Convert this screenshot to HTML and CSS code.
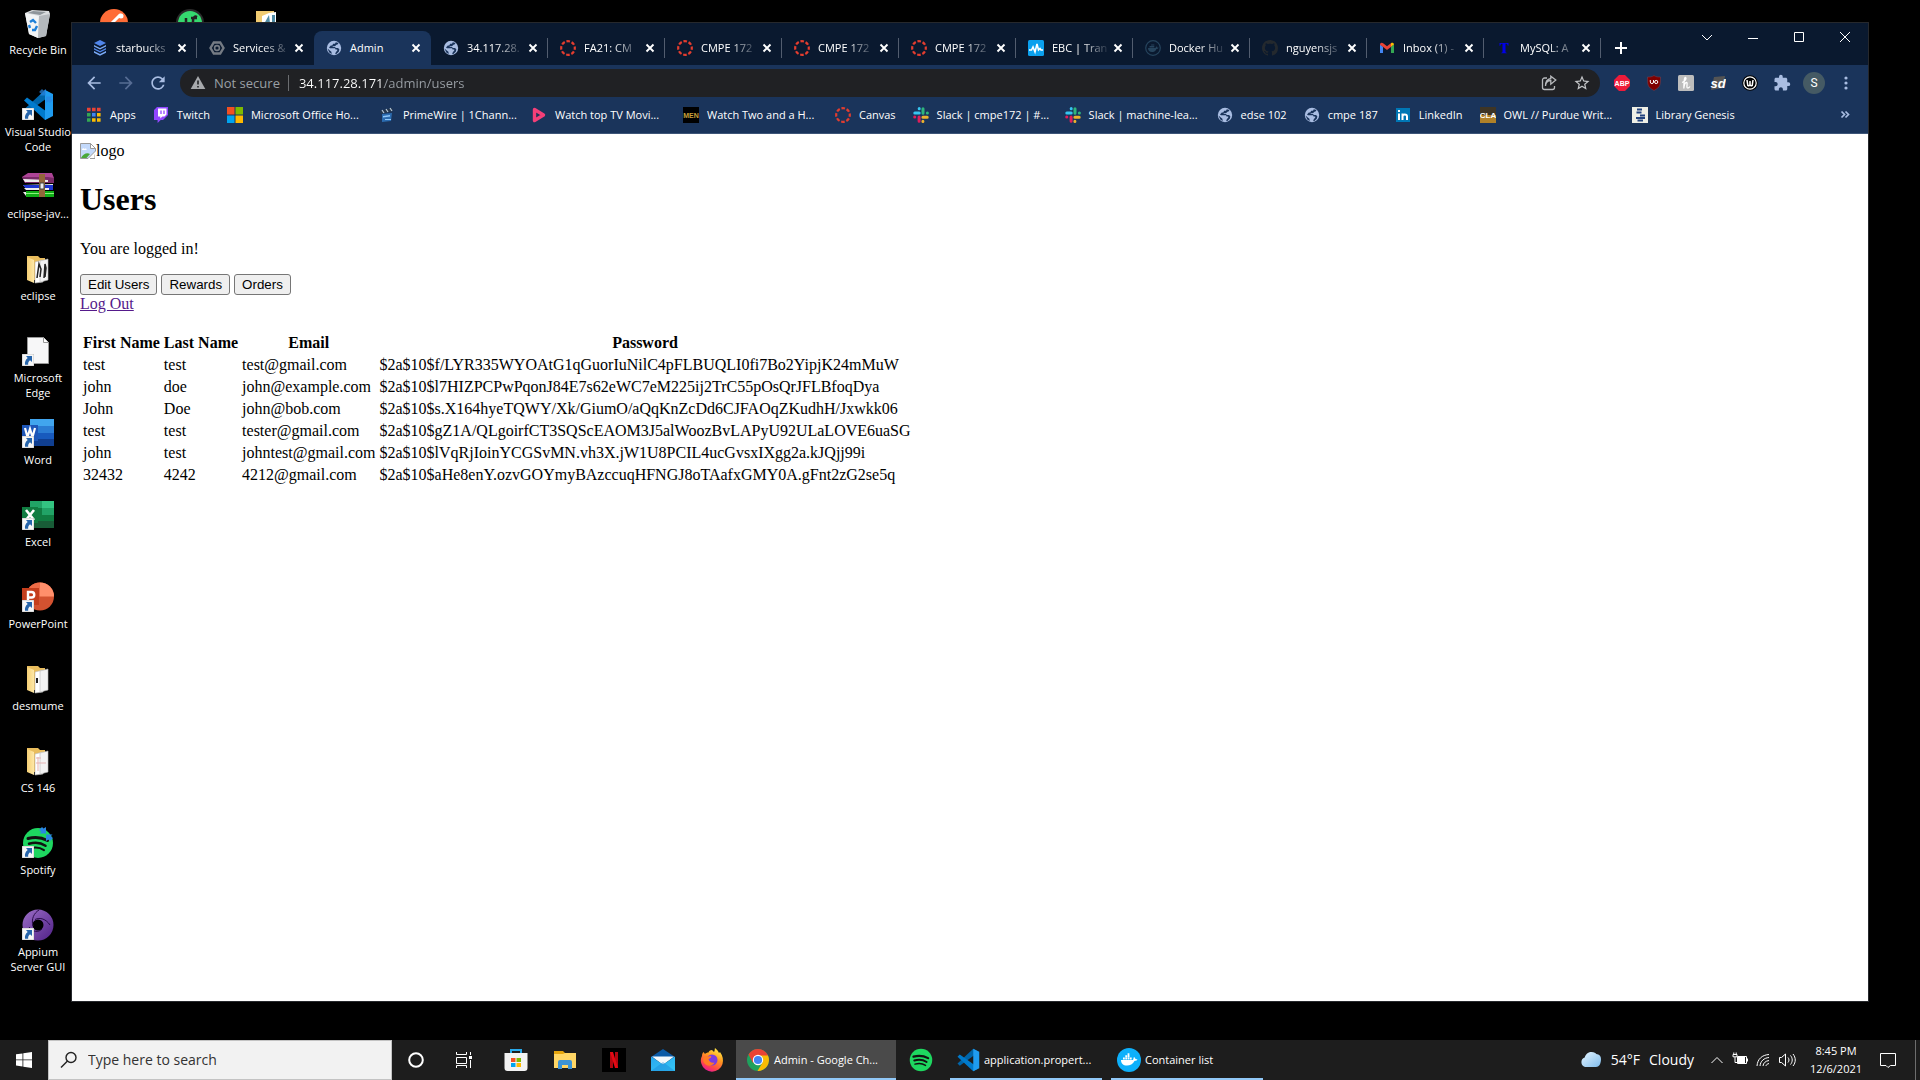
FILE: index.html
```html
<!DOCTYPE html>
<html lang="en">
<head>
<meta charset="utf-8">
<title>Admin</title>
<link rel="stylesheet" href="styles.css">
</head>
<body>
<svg class="defs" width="0" height="0" aria-hidden="true">
  <defs>
    <linearGradient id="g-purple" x1="0" y1="0" x2="1" y2="1"><stop offset="0" stop-color="#9062bd"/><stop offset="1" stop-color="#5c2d91"/></linearGradient>
    <linearGradient id="g-fox" x1="0.8" y1="0" x2="0.3" y2="1"><stop offset="0" stop-color="#fff04a"/><stop offset=".4" stop-color="#ff9a1f"/><stop offset=".75" stop-color="#ff4a45"/><stop offset="1" stop-color="#e8159c"/></linearGradient>
    <linearGradient id="g-cloud" x1="0" y1="0" x2="1" y2="1"><stop offset="0" stop-color="#e6f5ff"/><stop offset="1" stop-color="#7fbcec"/></linearGradient>
    <linearGradient id="g-folder" x1="0" y1="0" x2="1" y2="0"><stop offset="0" stop-color="#f5cf74"/><stop offset="1" stop-color="#ffe9a8"/></linearGradient>
    <linearGradient id="g-mail" x1="0" y1="0" x2="1" y2="1"><stop offset="0" stop-color="#2aa7ee"/><stop offset="1" stop-color="#35c6f5"/></linearGradient>
  </defs>
  <symbol id="globe" viewBox="0 0 16 16"><circle cx="8" cy="8" r="7.2" fill="#a9bde2"/><path fill="#1a345b" d="M9.800 2.200 9 3.800H7.200L6.200 5.500H4.800L3 7.400l1 .8h5l.6 1.300h1.600v1.300l-1.300 1.200-.7 1.900h1.200l2.400-2.100.6-2.200-1.300-1.500H10L8.600 6.700h-2l.2-.8h2.400l1.300-1.200 1.400-.4.5-1.200zM1.500 8.600l2.300 2 1.600 1.200.3 2.200-2.400-1.400z"/></symbol>
  <symbol id="canvas" viewBox="0 0 16 16"><circle cx="8" cy="8" r="6.8" fill="none" stroke="#e43d2f" stroke-width="2.2" stroke-dasharray="3.6 1.74" stroke-dashoffset="1.8"/></symbol>
  <symbol id="slack" viewBox="0 0 16 16"><g stroke-width="3" stroke-linecap="round"><path stroke="#36c5f0" d="M1.800 6h4.400M6.200 1.600v.1"/><path stroke="#2eb67d" d="M10 1.800v4.400M14.300 6.100h.1"/><path stroke="#ecb22e" d="M9.900 10.200h4.300M9.900 14.300v.1"/><path stroke="#e01e5a" d="M6.100 10.100v4.200M1.700 10.100h.1"/></g></symbol>
  <symbol id="close" viewBox="0 0 16 16"><path d="m4.500 4.500 7 7m0-7-7 7" fill="none" stroke="#fff" stroke-width="1.900"/></symbol>
  <symbol id="shortcut" viewBox="0 0 12 12"><path fill="#f7f7f7" stroke="#aaa" stroke-width=".6" d="M0 0h12v12H0z"/><path fill="#2765ab" d="M4 2h6v6L8 6.300C6.500 7.500 6 8.600 6.200 10.800H3C2.600 8.200 3.600 5.600 5.700 4z"/></symbol>
  <symbol id="vscode" viewBox="0 0 32 32"><path fill="#0065a9" d="M2 20.500 23 1l5 3v3L5 23.500z"/><path fill="#007acc" d="m2 11.500 3-3L28 25v3l-5 3z"/><path fill="#1f9cf0" d="m23 1 8 4v22l-8 4z"/></symbol>
  <symbol id="spotify" viewBox="0 0 32 32"><circle cx="16" cy="16" r="15" fill="#1ed760"/><path fill="none" stroke="#111" stroke-linecap="round" stroke-width="3" d="M6 11.500c7-2 14-1 19.500 2"/><path fill="none" stroke="#111" stroke-linecap="round" stroke-width="2.500" d="M7 16.700c6-1.700 12-1 16.500 2"/><path fill="none" stroke="#111" stroke-linecap="round" stroke-width="2" d="M8 21.500c5-1.500 10-1 14 1.700"/></symbol>
  <symbol id="folder" viewBox="0 0 32 32"><path fill="#e9bd5d" d="M5 3h11l2 2h5v22H5z"/><path fill="#fff" stroke="#bbb" stroke-width=".6" d="m13 9 8-2v22l-8 1z"/><path fill="#f3f3f3" stroke="#bbb" stroke-width=".6" d="m18 8 8-2v21l-8 2z"/><path fill="url(#g-folder)" d="M5 4 12 7v23l-7-3z"/></symbol>
  <symbol id="arrows" viewBox="0 0 14 14"><path fill="#2a86e2" d="m0 3 3-3 1.500 1.500L7 0v6.500H.5L2.300 4.800zM14 11l-3 3-1.500-1.500L7 14V7.500h6.500L11.700 9.200z"/></symbol>
</svg>

<main class="desktop">
  <ul class="shortcuts">
    <li class="shortcut"><svg width="32" height="32" viewBox="0 0 32 32"><path fill="#d9dcde" d="m3 6 7-3 17 1 1 3-4 22-8 2-9-4z"/><path fill="#f2f4f5" d="m3 6 14 3-1 22-9-4z"/><path fill="#b4b9bd" d="m17 9 11-2-4 22-8 2z"/><path fill="#8e959a" d="m6 6 5-2 13 1-6 3z"/><path fill="none" stroke="#1c7fd8" stroke-width="2.400" d="m8 15 3-2 3 3m1 3-2 4-3 0m-2-2-1-3"/></svg><span>Recycle Bin</span></li>
    <li class="shortcut"><svg width="32" height="32" viewBox="0 0 32 32"><use href="#vscode"/><use href="#arrows" x="17" y="0" width="14" height="14" opacity=".7"/><use href="#shortcut" y="19" width="12" height="12"/></svg><span>Visual Studio Code</span></li>
    <li class="shortcut"><svg width="32" height="32" viewBox="0 0 32 32"><path fill="#ad4496" d="m0 6 6-4h24l2 5v5H3z"/><path fill="#7a2a68" d="M0 6h26l6 1v5H4z"/><path fill="#eee" d="m1 8 25 1v2L3 11zM1 14l3 3h27v-4z"/><path fill="#1e35cf" d="M1 14h30v5H5z"/><path fill="#eee" d="M2 17h25v2H4zM1 21h30v4H4z"/><path fill="#10ae16" d="M4 20h28v6H4z"/><path fill="#8cf17e" d="M4 22h28v1H4z"/><path fill="#93663a" d="M17 3h6v23h-6z"/><path fill="#eee" stroke="#444" d="M18 12h4v6h-4z"/></svg><span>eclipse-jav...</span></li>
    <li class="shortcut"><svg width="32" height="32" viewBox="0 0 32 32"><use href="#folder"/><path fill="none" stroke="#222" stroke-width="1.500" d="m15 25 2-14 2 5-1 8m4 1 1-14 1 4-1 9"/></svg><span>eclipse</span></li>
    <li class="shortcut"><svg width="32" height="32" viewBox="0 0 32 32"><path fill="#f7f7f8" stroke="#999" d="M5.500 2.500h16l5 5v21h-21z"/><path fill="#fff" stroke="#999" d="M21.500 2.500v5h5"/><use href="#shortcut" y="19" width="12" height="12"/></svg><span>Microsoft Edge</span></li>
    <li class="shortcut"><svg width="32" height="32" viewBox="0 0 32 32"><path fill="#41a5ee" d="M8 2h24v7H8z"/><path fill="#2b7cd3" d="M8 9h24v7H8z"/><path fill="#185abd" d="M8 16h24v6H8z"/><path fill="#103f91" d="M8 22h24v7H8z"/><path fill="#1d56b8" d="M0 8h16v16H0z"/><path fill="none" stroke="#fff" stroke-width="2.200" d="m3 11 2.500 9L8 12l2.500 8L13 11"/><use href="#shortcut" y="19" width="12" height="12"/></svg><span>Word</span></li>
    <li class="shortcut"><svg width="32" height="32" viewBox="0 0 32 32"><path fill="#21a366" d="M8 2h24v7H8z"/><path fill="#33c481" d="M20 2h12v7H20z"/><path fill="#107c41" d="M8 9h24v13H8z"/><path fill="#21a366" d="M20 9h12v7H20z"/><path fill="#185c37" d="M8 22h24v7H8z"/><path fill="#107c41" d="M0 8h16v16H0z"/><path stroke="#fff" stroke-width="2.600" d="m4 11 8 10m0-10L4 21"/><use href="#shortcut" y="19" width="12" height="12"/></svg><span>Excel</span></li>
    <li class="shortcut"><svg width="32" height="32" viewBox="0 0 32 32"><circle cx="18" cy="15.500" r="14" fill="#d35230"/><path fill="#ff8f6b" d="M18 1.500a14 14 0 0 1 14 14H18z"/><path fill="#ed6c47" d="M18 1.500a14 14 0 0 0-14 14h14z"/><path fill="#c43e1c" d="M0 7h17v17H0z"/><path fill="none" stroke="#fff" stroke-width="2.400" d="M6 20v-9h3.500a2.500 2.500 0 0 1 0 5.500H6"/><use href="#shortcut" y="19" width="12" height="12"/></svg><span>PowerPoint</span></li>
    <li class="shortcut"><svg width="32" height="32" viewBox="0 0 32 32"><use href="#folder"/><path fill="#222" d="M14 15h2v5h-2z"/></svg><span>desmume</span></li>
    <li class="shortcut"><svg width="32" height="32" viewBox="0 0 32 32"><use href="#folder"/><path fill="none" stroke="#e5b3b3" d="M14 13h5m-5 5h10m-8-6v14"/></svg><span>CS 146</span></li>
    <li class="shortcut"><svg width="32" height="32" viewBox="0 0 32 32"><use href="#spotify"/><use href="#arrows" x="17" width="14" height="14"/><use href="#shortcut" y="19" width="12" height="12"/></svg><span>Spotify</span></li>
    <li class="shortcut"><svg width="32" height="32" viewBox="0 0 32 32"><circle cx="16" cy="16" r="10.500" fill="none" stroke="url(#g-purple)" stroke-width="10"/><path fill="none" stroke="#2a0d4a" d="M13 10.500C18 8 24 10 28 16M20 20c-4 4-9 3-13-2M11 17C9 10 12 4 17 1"/><use href="#shortcut" y="19" width="12" height="12"/></svg><span>Appium Server GUI</span></li>
  </ul>
  <ul class="shortcuts">
    <li class="shortcut"><svg width="32" height="32" viewBox="0 0 32 32"><circle cx="16" cy="16" r="14" fill="#ff6c37"/><path stroke="#fff" stroke-width="3" stroke-linecap="round" d="m11 19 11-11"/><circle cx="23" cy="9" r="2.500" fill="#fff"/></svg></li>
  </ul>
  <ul class="shortcuts">
    <li class="shortcut"><svg width="32" height="32" viewBox="0 0 32 32"><circle cx="16" cy="16" r="14" fill="#2b2b2b"/><circle cx="16" cy="16" r="12" fill="#35d96f"/><path fill="none" stroke="#222" stroke-width="2.500" d="M12 11v9m5-9h6m-4 9v-6c0-4 2-5 4-4"/></svg></li>
  </ul>
  <ul class="shortcuts">
    <li class="shortcut"><svg width="32" height="32" viewBox="0 0 32 32"><path fill="#f1cb71" d="M6 4h18v24H6z"/><path fill="#fff" d="m12 9 7-3 7-1v22H12z"/><path fill="#508ca5" d="m14 17 5-9 1 8zm8-9h3v8h-3z"/></svg></li>
  </ul>

  <section class="window" aria-label="Google Chrome">
    <div class="tabstrip">
      <div class="tab"><svg viewBox="0 0 16 16"><g fill="#5086ec"><path d="m8 0 6 3-6 3-6-3z"/><path d="m2 5 6 3 6-3v1.500l-6 3-6-3z" fill="#7baaf7"/><path d="m2 8 6 3 6-3v1.500l-6 3-6-3z"/><path d="m2 11 6 3 6-3v1.800l-6 3-6-3z" fill="#7baaf7"/></g></svg><span>starbucks</span><button aria-label="Close tab"><svg><use href="#close"/></svg></button></div>
      <div class="tab tab--last"><svg viewBox="0 0 16 16"><path fill="none" stroke="#757b84" stroke-width="2.400" d="M4.800 2.500h6.400L14.500 8l-3.300 5.500H4.800L1.500 8z"/><circle cx="8" cy="8" r="2.400" fill="none" stroke="#757b84" stroke-width="1.600"/></svg><span>Services &amp;</span><button aria-label="Close tab"><svg><use href="#close"/></svg></button></div>
      <div class="tab tab--active"><svg><use href="#globe"/></svg><span>Admin</span><button aria-label="Close tab"><svg><use href="#close"/></svg></button></div>
      <div class="tab"><svg><use href="#globe"/></svg><span>34.117.28.</span><button aria-label="Close tab"><svg><use href="#close"/></svg></button></div>
      <div class="tab"><svg><use href="#canvas"/></svg><span>FA21: CM</span><button aria-label="Close tab"><svg><use href="#close"/></svg></button></div>
      <div class="tab"><svg><use href="#canvas"/></svg><span>CMPE 172</span><button aria-label="Close tab"><svg><use href="#close"/></svg></button></div>
      <div class="tab"><svg><use href="#canvas"/></svg><span>CMPE 172</span><button aria-label="Close tab"><svg><use href="#close"/></svg></button></div>
      <div class="tab"><svg><use href="#canvas"/></svg><span>CMPE 172</span><button aria-label="Close tab"><svg><use href="#close"/></svg></button></div>
      <div class="tab"><svg viewBox="0 0 16 16"><rect width="16" height="16" rx="1.500" fill="#0aa0ee"/><path fill="none" stroke="#fff" stroke-width="1.600" d="M1 10h2.500L5 7l2 5 2-8 1.500 6L12 8.500l1 1.500h2"/></svg><span>EBC | Tran</span><button aria-label="Close tab"><svg><use href="#close"/></svg></button></div>
      <div class="tab"><svg viewBox="0 0 16 16"><circle cx="8" cy="8" r="7.300" fill="none" stroke="#26445d" stroke-width="1.200"/><path fill="#26445d" d="M3 8h7.500l.8-1.800 1 1.300 1.400.3c-.6 1-1.500 1.200-2.200 1.200C10.500 11.500 8.500 12 7 12c-2.500 0-4-1.500-4-4zm1.500-2h4.800v1.500H4.500zm1.600-1.500h3.200v1H6.100z"/></svg><span>Docker Hu</span><button aria-label="Close tab"><svg><use href="#close"/></svg></button></div>
      <div class="tab"><svg viewBox="0 0 16 16"><path fill="#24292e" d="M8 0C3.580 0 0 3.580 0 8c0 3.540 2.290 6.530 5.470 7.590.4.070.55-.17.55-.38 0-.19-.01-.82-.01-1.490-2.010.37-2.530-.49-2.690-.94-.09-.23-.48-.94-.82-1.130-.28-.15-.68-.52-.01-.53.63-.01 1.080.58 1.230.82.72 1.210 1.870.87 2.330.66.07-.52.28-.87.51-1.070-1.780-.2-3.640-.89-3.640-3.950 0-.87.31-1.590.82-2.150-.08-.2-.36-1.020.08-2.120 0 0 .67-.21 2.200.82.64-.18 1.320-.27 2-.27s1.360.09 2 .27c1.530-1.040 2.200-.82 2.200-.82.44 1.100.16 1.920.08 2.120.51.56.82 1.270.82 2.150 0 3.070-1.870 3.750-3.650 3.950.29.25.54.73.54 1.480 0 1.070-.01 1.930-.01 2.200 0 .21.15.46.55.38A8.010 8.010 0 0 0 16 8c0-4.420-3.580-8-8-8z"/></svg><span>nguyensjs</span><button aria-label="Close tab"><svg><use href="#close"/></svg></button></div>
      <div class="tab"><svg viewBox="0 0 16 16"><path fill="#4285f4" d="M1 4.500 4 6.700V13H1z"/><path fill="#34a853" d="m12 6.700 3-2.200V13h-3z"/><path fill="#ea4335" d="m1 4 1-1.200 1.800.3L8 6.200l4.200-3.100V6.800L8 9.900 3.800 6.800 1 4.800z"/><path fill="#fbbc04" d="M12 3.200c1.200-.9 3-.2 3 1.300l-3 2.300z"/></svg><span>Inbox (1) -</span><button aria-label="Close tab"><svg><use href="#close"/></svg></button></div>
      <div class="tab"><svg viewBox="0 0 16 16"><path fill="#0000e8" d="M3.500 3h9v2.700h-.7c-.3-1.400-.9-1.900-2.300-1.900v7.700c0 1 .3 1.200 1.300 1.200v.6H5.200v-.6c1 0 1.300-.2 1.300-1.200V3.800c-1.400 0-2 .5-2.300 1.900h-.7z"/></svg><span>MySQL: A</span><button aria-label="Close tab"><svg><use href="#close"/></svg></button></div>
      <button class="new-tab" aria-label="New tab"><svg width="16" height="16" viewBox="0 0 16 16"><path stroke="#fff" stroke-width="2" d="M8 2v12M2 8h12"/></svg></button>
      <div class="window-controls">
        <button aria-label="Search tabs"><svg width="12" height="12" viewBox="0 0 12 12"><path d="m1 4 5 5 5-5"/></svg></button>
        <button aria-label="Minimize"><svg width="12" height="12" viewBox="0 0 12 12"><path d="M1 7.500h10"/></svg></button>
        <button aria-label="Maximize"><svg width="12" height="12" viewBox="0 0 12 12"><path d="M1.500 1.500h9v9h-9z"/></svg></button>
        <button aria-label="Close"><svg width="12" height="12" viewBox="0 0 12 12"><path d="m1 1 10 10m0-10L1 11"/></svg></button>
      </div>
    </div>

    <div class="toolbar">
      <button class="tool" aria-label="Back"><svg width="20" height="20" viewBox="0 0 24 24"><path fill="#a9bde2" d="M20 11H7.830l5.590-5.590L12 4l-8 8 8 8 1.410-1.410L7.830 13H20v-2z"/></svg></button>
      <button class="tool" aria-label="Forward"><svg width="20" height="20" viewBox="0 0 24 24"><path fill="#576d94" d="m12 4-1.410 1.410L16.170 11H4v2h12.170l-5.580 5.590L12 20l8-8z"/></svg></button>
      <button class="tool" aria-label="Reload"><svg width="20" height="20" viewBox="0 0 24 24"><path fill="#a9bde2" d="M17.650 6.350A7.958 7.958 0 0 0 12 4c-4.420 0-7.990 3.580-7.990 8s3.570 8 7.990 8c3.730 0 6.840-2.550 7.730-6h-2.080A5.990 5.990 0 0 1 12 18c-3.310 0-6-2.690-6-6s2.690-6 6-6c1.660 0 3.140.69 4.220 1.780L13 11h7V4l-2.350 2.350z"/></svg></button>
      <div class="omnibox">
        <button class="security"><svg width="16" height="16" viewBox="0 0 16 16"><path fill="#a7a9ac" d="M8 1 .7 14h14.600z"/><path stroke="#202124" stroke-width="1.600" d="M8 5.500v4M8 11v1.600"/></svg>Not secure</button>
        <input class="url" type="text" aria-label="Address" value="34.117.28.171/admin/users">
        <button aria-label="Share"><svg width="16" height="16" viewBox="0 0 16 16"><path fill="none" stroke="#b8babd" stroke-width="1.300" d="M6 3H3.500A2 2 0 0 0 1.500 5v7.500a2 2 0 0 0 2 2h8a2 2 0 0 0 2-2V11M4.500 11c.2-3.500 2-5.400 5.300-5.500V9.200L14.800 5 9.800 1.200v2.300C6 4.200 4.500 7 4.500 11z"/></svg></button>
        <button aria-label="Bookmark this tab"><svg width="18" height="18" viewBox="0 0 24 24"><path fill="#c4c6c9" d="m22 9.240-7.190-.62L12 2 9.190 8.630 2 9.240l5.460 4.730L5.820 21 12 17.270 18.180 21l-1.630-7.030L22 9.240zM12 15.400l-3.760 2.270 1-4.280-3.320-2.880 4.380-.38L12 6.100l1.710 4.040 4.380.38-3.320 2.880 1 4.280L12 15.400z"/></svg></button>
      </div>
      <button class="tool" aria-label="Adblock Plus"><svg width="16" height="16" viewBox="0 0 16 16"><path fill="#ee1b3a" d="M5 0h6l5 5v6l-5 5H5l-5-5V5z"/><text class="glyph" x="8" y="10.500" font-size="7">ABP</text></svg></button>
      <button class="tool" aria-label="uBlock Origin"><svg width="16" height="16" viewBox="0 0 16 16"><path fill="#800000" stroke="#6c4050" stroke-width=".6" d="M8 .5c2 1.500 4 1.500 6.500 1.500 0 8 0 10-6.500 13.500C1.500 12 1.500 10 1.500 2 4 2 6 2 8 .5z"/><path fill="none" stroke="#fff" d="M4.300 5v2a1.600 1.600 0 0 0 3.200 0V5"/><circle cx="10.200" cy="7" r="1.600" fill="none" stroke="#fff"/></svg></button>
      <button class="tool" aria-label="Honey"><svg width="16" height="16" viewBox="0 0 16 16"><rect width="16" height="16" rx="1.500" fill="#bdbdbd"/><path fill="none" stroke="#fff" stroke-width="1.300" d="M4 7.500C7 6.500 9 3 7.500 2.500 6 2.200 6 9 5.800 13.500c.4-3.500 1.200-6 2.600-6s.2 3.500.6 4.700c.5 1.300 2 .8 3-.7"/></svg></button>
      <button class="tool" aria-label="Slickdeals"><svg width="16" height="16" viewBox="0 0 16 16"><path fill="#545454" d="m4 2 11-1-2 12-12 2z"/><text class="glyph glyph--italic" x="8" y="13" font-size="13">sd</text></svg></button>
      <button class="tool" aria-label="Wikiwand"><svg width="16" height="16" viewBox="0 0 16 16"><circle cx="8" cy="8" r="7.800" fill="#000"/><circle cx="8" cy="8" r="6.200" fill="none" stroke="#fff" stroke-width="1.200"/><path fill="none" stroke="#fff" stroke-width="1.500" d="m5 5 .8 5.500c1 .8 2 0 2.200-1V6v3.500c.2 1 1.200 1.800 2.200 1L11 5"/></svg></button>
      <button class="tool" aria-label="Extensions"><svg width="18" height="18" viewBox="0 0 24 24"><path fill="#a9bde2" d="M20.500 11H19V7c0-1.100-.9-2-2-2h-4V3.500a2.500 2.500 0 0 0-5 0V5H4c-1.100 0-1.990.9-1.990 2v3.800H3.500c1.490 0 2.700 1.210 2.700 2.700s-1.210 2.700-2.700 2.700H2V20c0 1.100.9 2 2 2h3.800v-1.500c0-1.490 1.210-2.700 2.700-2.700 1.490 0 2.700 1.210 2.700 2.700V22H17c1.100 0 2-.9 2-2v-4h1.500a2.500 2.500 0 0 0 0-5z"/></svg></button>
      <button class="tool" aria-label="Profile"><span class="avatar">S</span></button>
      <button class="tool" aria-label="Menu"><svg width="16" height="16" viewBox="0 0 16 16"><g fill="#a9bde2"><circle cx="8" cy="3" r="1.600"/><circle cx="8" cy="8" r="1.600"/><circle cx="8" cy="13" r="1.600"/></g></svg></button>
    </div>

    <nav class="bookmarks" aria-label="Bookmarks">
      <a href="#"><svg viewBox="0 0 16 16"><g stroke-width="3.600" stroke-dasharray="3.600 1.400"><path stroke="#ea4335" d="M1 2.500h14"/><path stroke="#34a853" d="M1 7.700h5M1 13h5"/><path stroke="#4285f4" d="M6 7.700h4.500"/><path stroke="#fbbc04" d="M11 7.700h4M6 13h9"/></g></svg>Apps</a>
      <a href="#"><svg viewBox="0 0 16 16"><path fill="#9146ff" d="m4 0-3 3v10h3.600v3L7.700 13H10l5-5V0z"/><path fill="#fff" d="M5 1.500h8.500v6L11.500 9.500H9.300L7.300 11.500v-2H5z"/><path stroke="#9146ff" stroke-width="1.300" d="M8 3.500V7m3-3.500V7"/></svg>Twitch</a>
      <a href="#" class="long"><svg viewBox="0 0 16 16"><path fill="#f25022" d="M0 0h7.500v7.500H0z"/><path fill="#7fba00" d="M8.500 0H16v7.500H8.500z"/><path fill="#00a4ef" d="M0 8.500h7.500V16H0z"/><path fill="#ffb900" d="M8.500 8.500H16V16H8.500z"/></svg>Microsoft Office Ho...</a>
      <a href="#" class="long"><svg viewBox="0 0 16 16"><path fill="#26384d" d="m1 4 12-3 1 3L2 7z"/><path stroke="#b9c9d9" stroke-width="1.200" d="m3 3 2 3m2-4 2 3m2-4 2 3"/><path fill="#2c6cb0" d="m3 7 10-1-1 8-9 1z"/><path fill="#8fc8fa" d="m4 9 7-1v1.500L4 10.500zm2 3h6v1H6z"/></svg>PrimeWire | 1Chann...</a>
      <a href="#" class="long"><svg viewBox="0 0 16 16"><path fill="none" stroke="#f43f78" stroke-width="3.400" stroke-linejoin="round" d="M3.500 2.500 12.500 8l-9 5.500z"/></svg>Watch top TV Movi...</a>
      <a href="#" class="long"><svg viewBox="0 0 16 16"><path d="M0 0h16v16H0z"/><text class="glyph glyph--gold" x="8" y="10.500" font-size="7">MEN</text></svg>Watch Two and a H...</a>
      <a href="#"><svg><use href="#canvas"/></svg>Canvas</a>
      <a href="#" class="long"><svg><use href="#slack"/></svg>Slack | cmpe172 | #...</a>
      <a href="#" class="long"><svg><use href="#slack"/></svg>Slack | machine-lea...</a>
      <a href="#"><svg><use href="#globe"/></svg>edse 102</a>
      <a href="#"><svg><use href="#globe"/></svg>cmpe 187</a>
      <a href="#"><svg viewBox="0 0 16 16"><path fill="#0077b5" d="M1 1h14v14H1z"/><path fill="none" stroke="#fff" stroke-width="2" d="M4 6.500V13M4 3v2M7.500 13V6.500M7.500 9.500c0-2.500 4.500-3 4.500 0V13"/></svg>LinkedIn</a>
      <a href="#" class="long"><svg viewBox="0 0 16 16"><path fill="#3e3525" d="M0 0h16v8H0z"/><path fill="#b08128" d="M0 8h16v8H0z"/><text class="glyph" x="8" y="11" font-size="8">CLA</text></svg>OWL // Purdue Writ...</a>
      <a href="#"><svg viewBox="0 0 16 16"><path fill="#efefe6" d="M0 0h16v16H0z"/><path fill="none" stroke="#23437e" stroke-width="2" d="M5 2.500h5M4.500 5.500h5M8 8.500h5M4 11h9M5.500 13.500H11"/></svg>Library Genesis</a>
      <button class="more" aria-label="More bookmarks"><svg width="10" height="10" viewBox="0 0 10 10"><path fill="none" stroke="#a9bde2" stroke-width="1.700" d="m1.500 1.500 3 3-3 3m4-6 3 3-3 3"/></svg></button>
    </nav>

    <article class="page">
      <div class="logo"><svg width="16" height="16" viewBox="0 0 16 16"><path fill="#c3d9fb" stroke="#9a9a9a" d="M.5.500h10l5 5V8l-7.500 7.500H.5z"/><path fill="#fff" stroke="#9a9a9a" d="M10.500.500v5h5z"/><path fill="#fff" d="M2 7c0-2 2-2 2.500-1C6 5 7 6 6.500 7z"/><path fill="#4aa83a" d="M1 15c2-4 6-6 9-4l-3.500 4z"/><path fill="#9a9a9a" d="M15 11v5h-5v-1h4.500v-3z"/></svg>logo</div>
      <h1>Users</h1>
      <p>You are logged in!</p>
      <button>Edit Users</button>
      <button>Rewards</button>
      <button>Orders</button>
      <br>
      <a href="#">Log Out</a>
      <br><br>
      <table>
        <thead><tr><th>First Name</th><th>Last Name</th><th>Email</th><th>Password</th></tr></thead>
        <tbody>
          <tr><td>test</td><td>test</td><td>test@gmail.com</td><td>$2a$10$f/LYR335WYOAtG1qGuorIuNilC4pFLBUQLI0fi7Bo2YipjK24mMuW</td></tr>
          <tr><td>john</td><td>doe</td><td>john@example.com</td><td>$2a$10$l7HIZPCPwPqonJ84E7s62eWC7eM225ij2TrC55pOsQrJFLBfoqDya</td></tr>
          <tr><td>John</td><td>Doe</td><td>john@bob.com</td><td>$2a$10$s.X164hyeTQWY/Xk/GiumO/aQqKnZcDd6CJFAOqZKudhH/Jxwkk06</td></tr>
          <tr><td>test</td><td>test</td><td>tester@gmail.com</td><td>$2a$10$gZ1A/QLgoirfCT3SQScEAOM3J5alWoozBvLAPyU92ULaLOVE6uaSG</td></tr>
          <tr><td>john</td><td>test</td><td>johntest@gmail.com</td><td>$2a$10$lVqRjIoinYCGSvMN.vh3X.jW1U8PCIL4ucGvsxIXgg2a.kJQjj99i</td></tr>
          <tr><td>32432</td><td>4242</td><td>4212@gmail.com</td><td>$2a$10$aHe8enY.ozvGOYmyBAzccuqHFNGJ8oTAafxGMY0A.gFnt2zG2se5q</td></tr>
        </tbody>
      </table>
    </article>
  </section>
</main>

<footer class="taskbar">
  <button class="task task--system" aria-label="Start"><svg width="16" height="16" viewBox="0 0 16 16"><path fill="#fff" d="m0 2.300 6.500-.9v6.100H0zM7.300 1.300 16 0v7.500H7.300zM0 8.300h6.500v6.200L0 13.600zm7.300 0H16V16l-8.700-1.300z"/></svg></button>
  <label class="search"><svg width="18" height="18" viewBox="0 0 18 18"><circle cx="11" cy="6.500" r="5" fill="none" stroke="#222" stroke-width="1.400"/><path stroke="#222" stroke-width="1.400" d="m7.500 10-6.500 6.500"/></svg><input type="text" aria-label="Search" placeholder="Type here to search"></label>
  <button class="task task--system" aria-label="Cortana"><svg width="18" height="18" viewBox="0 0 18 18"><circle cx="9" cy="9" r="6.800" fill="none" stroke="#fff" stroke-width="2"/></svg></button>
  <button class="task task--system" aria-label="Task View"><svg width="16" height="16" viewBox="0 0 16 16"><path fill="none" stroke="#fff" d="M.5 0v2.500h10V0M.5 5.500h10v6H.5zM.5 16v-2.500h10V16M14.500 0v3M14.500 8v8"/><path fill="#fff" d="M13 4h3v3h-3z"/></svg></button>
  <div class="apps">
    <button class="task" aria-label="Microsoft Store"><svg width="24" height="24" viewBox="0 0 24 24"><path fill="none" stroke="#28a9ea" stroke-width="2" d="M7 6V2h10v4"/><path fill="#f2f2f2" d="M.5 5h23v15a3 3 0 0 1-3 3h-17a3 3 0 0 1-3-3z"/><path fill="#f25022" d="M7 10h4.500v4H7z"/><path fill="#7fba00" d="M12.500 10H17v4h-4.500z"/><path fill="#00a4ef" d="M7 15h4.500v4H7z"/><path fill="#ffb900" d="M12.500 15H17v4h-4.500z"/></svg></button>
    <button class="task" aria-label="File Explorer"><svg width="24" height="24" viewBox="0 0 24 24"><path fill="#e5a50d" d="M1 3h9l2 2h11v5H1z"/><path fill="#ffd665" d="M1 6h9l2-1h11v15H1z"/><path fill="#3c93d5" d="M5 14a2 2 0 0 1 2-2h10a2 2 0 0 1 2 2v7h-4v-4H9v4H5z"/></svg></button>
    <button class="task" aria-label="Netflix"><svg width="24" height="24" viewBox="0 0 24 24"><path d="M0 0h24v24H0z"/><path fill="#b10710" d="M8 4h3v16H8zM13 4h3v16h-3z"/><path fill="#e50914" d="M8 4h3l5 16h-3z"/></svg></button>
    <button class="task" aria-label="Mail"><svg width="24" height="24" viewBox="0 0 24 24"><path fill="#0b5aa6" d="m0 9 12-8 12 8v3H0z"/><path fill="#f4f8fb" d="M1 8.500h22L12 17z"/><path fill="url(#g-mail)" d="m0 8.500 12 8 12-8V23H0z"/><path fill="#1b87d8" d="m0 23 12-9 12 9z" opacity=".45"/></svg></button>
    <button class="task" aria-label="Firefox"><svg width="24" height="24" viewBox="0 0 24 24"><path fill="url(#g-fox)" d="M2 8c0-2 .5-3 1.500-4L5 6c1-1 2-1.500 3.500-1.500C9 3 10 2 12 2l2 2c1-1 .5-3 1-4 2 1.500 3 3 4 5l1-1c3 4 3.500 8 2.500 12A11 11 0 0 1 1.500 16C.3 13 .8 10 2 8z"/><circle cx="12" cy="12" r="5.500" fill="#7b3be0"/><path fill="#ff7b25" d="M3 11c1-3 4-3.500 5-2.500l3-.5c1 1-1 2.500-2.500 3 .5 3 3.500 4.500 6 3.500-2 4.500-9 4-11-.5z"/></svg></button>
    <button class="task task--labelled task--active"><svg width="24" height="24" viewBox="0 0 24 24"><circle cx="12" cy="12" r="11" fill="#1fa15d"/><path fill="#ea4335" d="M2.500 6.500a11 11 0 0 1 19 0L22 8H12l-5 7z"/><path fill="#fbbc04" d="M12 7.500h10A11 11 0 0 1 11.500 23l5-8.500z"/><circle cx="12" cy="12" r="5.200" fill="#fff"/><circle cx="12" cy="12" r="4.100" fill="#4285f4"/></svg><span>Admin - Google Ch...</span></button>
    <button class="task" aria-label="Spotify"><svg width="24" height="24"><use href="#spotify"/></svg></button>
    <button class="task task--labelled task--open"><svg width="24" height="24"><use href="#vscode"/></svg><span>application.propert...</span></button>
    <button class="task task--labelled task--open"><svg width="24" height="24" viewBox="0 0 24 24"><circle cx="12" cy="12" r="12" fill="#0db0fb"/><path fill="#fff" d="M4 12h12c.6-1 .3-2 1-3 1 .5 1.300 1.200 1.500 2 1 0 1.700.2 2 .5-.8 1.200-2 1.400-3 1.400C16 16 13 17.500 10 17.500c-4 0-6-2-6-5.500z"/><path fill="none" stroke="#fff" stroke-width="2" stroke-dasharray="1.800 .5" d="M6 10.500h9.200M8.300 8.200H13M10.600 6.300h2"/></svg><span>Container list</span></button>
  </div>
  <div class="tray">
    <button class="weather"><svg width="22" height="18" viewBox="0 0 22 18"><path fill="url(#g-cloud)" d="M5 16a5 5 0 0 1-.3-9.500C6 2.500 8.500 1 11.500 1c3 0 4 1 4.800 2 3 .3 4.700 2 4.700 5 0 5-2 8-5 8z"/></svg><span>54°F</span><span>Cloudy</span></button>
    <button aria-label="Show hidden icons"><svg width="14" height="14" viewBox="0 0 14 14"><path d="m1.500 10 5.500-5.500L12.500 10"/></svg></button>
    <button aria-label="Battery"><svg width="16" height="16" viewBox="0 0 16 16"><path d="M5.500 4.500h9v7h-9zM15.500 6.500v3M1 2.500h4v2.300H1zM3 5v5.500h2M1.800.500v2M4.200.500v2"/><path class="solid" d="M6 5h7v6H6z"/></svg></button>
    <button aria-label="Network"><svg width="14" height="14" viewBox="0 0 14 14"><path d="M1 13C1.500 6 6 2 13 1.500M4 13c.5-5 4-8 9-8.500M7 13c.3-3 2.500-5 6-5.500M10 13c0-1 1-2 3-2.500"/></svg></button>
    <button aria-label="Volume"><svg width="18" height="16" viewBox="0 0 18 16"><path d="M1.500 5.500h2L7.500 2v12l-4-3.500h-2zM10 5.500c1.300 1.500 1.300 3.500 0 5M12.500 3.500c2.300 2.800 2.300 6.200 0 9M15 2c3 3.800 3 8.200 0 12"/></svg></button>
    <button class="clock"><span>8:45 PM</span><span>12/6/2021</span></button>
  </div>
  <button class="notifications" aria-label="Notifications"><svg width="18" height="18" viewBox="0 0 18 18"><path fill="none" stroke="#fff" d="M1.500 2.500h15v12h-5L9 16.500l-2-2H1.500z"/></svg></button>
</footer>
</body>
</html>
```
FILE: styles.css
```css
* { box-sizing: border-box; }

body {
  margin: 0;
  min-height: 100vh;
  display: flex;
  flex-direction: column;
  background: #000;
  color: #fff;
  font: 11px/16px "Open Sans", "Noto Sans", sans-serif;
}

button {
  margin: 0;
  padding: 0;
  border: 0;
  background: none;
  color: inherit;
  font: inherit;
}

svg { flex: none; display: block; }
.defs { position: absolute; }

.glyph {
  fill: #fff;
  font-family: "Liberation Sans", sans-serif;
  font-weight: 700;
  text-anchor: middle;
}
.glyph--italic { font-style: italic; }
.glyph--gold { fill: #c9a03c; }

/* Desktop */
.desktop {
  position: relative;
  flex: 1;
  display: flex;
}
.shortcuts {
  width: 76px;
  margin: 0;
  padding: 7px 0 0;
  list-style: none;
  display: grid;
  align-content: start;
  grid-auto-rows: 82px;
}
.shortcut {
  display: flex;
  flex-direction: column;
  align-items: center;
  gap: 3px;
  padding: 0 3px;
  line-height: 15px;
  text-align: center;
}

/* Browser window floating over the desktop */
.window {
  position: absolute;
  inset: 22px 51px 38px 71px;
  display: flex;
  flex-direction: column;
  border: 1px solid #26282c;
  background: #fff;
  overflow: hidden;
}

.tabstrip {
  display: flex;
  align-items: flex-end;
  height: 42px;
  padding-left: 8px;
  background: #0a192f;
}
.tab {
  position: relative;
  display: flex;
  align-items: center;
  width: 117px;
  height: 34px;
  padding: 0 7px 0 12px;
  white-space: nowrap;
}
.tab > svg { width: 16px; height: 16px; }
.tab > span {
  flex: 1;
  min-width: 0;
  margin-left: 8px;
  mask-image: linear-gradient(to right, #000 50%, transparent);
}
.tab button svg { width: 16px; height: 16px; }
.tab:not(.tab--active, .tab--last)::after {
  content: "";
  position: absolute;
  top: 7px;
  right: 0;
  width: 1px;
  height: 20px;
  background: #525d6f;
}
.tab--active {
  border-radius: 8px 8px 0 0;
  background: #1a345b;
}
.tab--active > span { mask-image: none; }
.new-tab { width: 40px; height: 34px; display: grid; place-items: center; }

.window-controls {
  align-self: flex-start;
  display: flex;
  margin-left: auto;
}
.window-controls button { width: 46px; height: 28px; display: grid; place-items: center; }
.window-controls path { fill: none; stroke: #fff; }

.toolbar {
  display: flex;
  align-items: center;
  height: 36px;
  padding: 0 6px;
  background: #1a345b;
}
.tool { width: 32px; height: 32px; display: grid; place-items: center; }
.avatar {
  width: 22px;
  height: 22px;
  border-radius: 50%;
  background: #455a64;
  font: 12px/22px Roboto, sans-serif;
}
.omnibox {
  flex: 1;
  display: flex;
  align-items: center;
  gap: 16px;
  height: 28px;
  margin: 0 6px;
  padding: 0 9px 0 10px;
  border-radius: 14px;
  background: #202124;
  font-size: 13px;
}
.security {
  display: flex;
  align-items: center;
  gap: 8px;
  padding-right: 8px;
  border-right: 1px solid #6b6d70;
  color: #9aa0a6;
  line-height: 16px;
}
.url {
  flex: 1;
  min-width: 0;
  margin-left: -6px;
  padding: 0;
  border: 0;
  outline: 0;
  font: inherit;
  color: transparent;
  background: linear-gradient(to right, #fff 85px, #9aa0a6 85px);
  background-clip: text;
}

.bookmarks {
  display: flex;
  align-items: center;
  gap: 17px;
  height: 33px;
  padding: 0 18px 4px 14px;
  border-bottom: 1px solid #3d5578;
  background: #1a345b;
}
.bookmarks a {
  display: flex;
  align-items: center;
  gap: 8px;
  color: #fff;
  text-decoration: none;
  white-space: nowrap;
}
.bookmarks a > svg { width: 16px; height: 16px; }
.bookmarks .long { width: 135px; }
.more { margin-left: auto; }

/* Web page */
.page {
  flex: 1;
  padding: 8px;
  color: #000;
  font: 16px/normal "Liberation Serif", "Times New Roman", serif;
}
.logo { display: flex; align-items: center; }
.page h1 { margin: 21px 0 22px; font-size: 32px; }
.page p { margin: 16px 0; }
.page button {
  padding: 2px 7px;
  border: 1px solid #767676;
  border-radius: 3px;
  background: #efefef;
  font: 13.333px "Liberation Sans", Arial, sans-serif;
}
.page a { color: #551a8b; }
.page table { border-spacing: 2px; }
.page th, .page td { padding: 1px; }

/* Taskbar */
.taskbar {
  display: flex;
  height: 40px;
  background: #1d1d1d;
}
.task {
  position: relative;
  display: flex;
  align-items: center;
  justify-content: center;
  gap: 4px;
  width: 49px;
  white-space: nowrap;
}
.task--system { width: 48px; }
.search {
  display: flex;
  align-items: center;
  gap: 10px;
  width: 344px;
  padding: 0 11px;
  border: 1px solid #c3c3c3;
  background: #f2f2f2;
}
.search input {
  flex: 1;
  min-width: 0;
  padding: 0;
  border: 0;
  outline: 0;
  background: none;
  font: 14px/20px "Open Sans", sans-serif;
}
.search input::placeholder { color: #333; opacity: 1; }
.apps { display: flex; padding-left: 3px; }
.task--labelled { width: 152px; padding-left: 6px; justify-content: flex-start; }
.task--labelled + .task--labelled { margin-left: 9px; }
.task--labelled::after {
  content: "";
  position: absolute;
  inset: auto 0 0;
  height: 2px;
  background: #91c8f7;
}
.task--active { width: 160px; padding-left: 10px; background: #4a4a4a; }
.task--active + .task { margin-right: 5px; }

.tray {
  display: flex;
  align-items: center;
  gap: 8px;
  margin-left: auto;
}
.tray path { fill: none; stroke: #fff; }
.tray .solid { fill: #fff; stroke: none; }
.tray .weather path { fill: url(#g-cloud); stroke: none; }
.weather {
  display: flex;
  align-items: center;
  gap: 9px;
  margin-right: 8px;
  font-size: 14px;
}
.clock { display: flex; flex-direction: column; gap: 2px; width: 64px; text-align: center; }
.notifications {
  display: flex;
  align-items: center;
  width: 48px;
  margin-right: 4px;
  padding-left: 11px;
  border-right: 1px solid #6e6e6e;
}
```
